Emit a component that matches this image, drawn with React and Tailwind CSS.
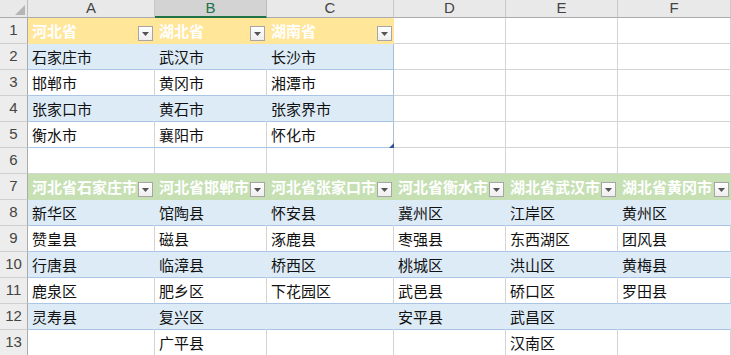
import React from 'react';

const COLS = [
  { key: 'A', w: 'w-[127px]' },
  { key: 'B', w: 'w-[112px]' },
  { key: 'C', w: 'w-[127px]' },
  { key: 'D', w: 'w-[112px]' },
  { key: 'E', w: 'w-[112px]' },
  { key: 'F', w: 'w-[113px]' },
];

// each row: kind per cell + text
const ROWS = [
  { n: 1, cells: [['yh', '河北省'], ['yh', '湖北省'], ['yh', '湖南省'], ['p'], ['p'], ['p']] },
  { n: 2, cells: [['b', '石家庄市'], ['b', '武汉市'], ['be', '长沙市'], ['p'], ['p'], ['p']] },
  { n: 3, cells: [['w', '邯郸市'], ['w', '黄冈市'], ['we', '湘潭市'], ['p'], ['p'], ['p']] },
  { n: 4, cells: [['b', '张家口市'], ['b', '黄石市'], ['be', '张家界市'], ['p'], ['p'], ['p']] },
  { n: 5, cells: [['w', '衡水市'], ['w', '襄阳市'], ['we', '怀化市', true], ['p'], ['p'], ['p']] },
  { n: 6, cells: [['p'], ['p'], ['p'], ['p'], ['p'], ['p']] },
  {
    n: 7,
    cells: [
      ['gh', '河北省石家庄市'],
      ['gh', '河北省邯郸市'],
      ['gh', '河北省张家口市'],
      ['gh', '河北省衡水市'],
      ['gh', '湖北省武汉市'],
      ['gh', '湖北省黄冈市'],
    ],
  },
  { n: 8, cells: [['b', '新华区'], ['b', '馆陶县'], ['b', '怀安县'], ['b', '冀州区'], ['b', '江岸区'], ['b', '黄州区']] },
  { n: 9, cells: [['w', '赞皇县'], ['w', '磁县'], ['w', '涿鹿县'], ['w', '枣强县'], ['w', '东西湖区'], ['w', '团风县']] },
  { n: 10, cells: [['b', '行唐县'], ['b', '临漳县'], ['b', '桥西区'], ['b', '桃城区'], ['b', '洪山区'], ['b', '黄梅县']] },
  { n: 11, cells: [['w', '鹿泉区'], ['w', '肥乡区'], ['w', '下花园区'], ['w', '武邑县'], ['w', '硚口区'], ['w', '罗田县']] },
  { n: 12, cells: [['b', '灵寿县'], ['b', '复兴区'], ['b', ''], ['b', '安平县'], ['b', '武昌区'], ['b', '']] },
  { n: 13, cells: [['w', ''], ['w', '广平县'], ['w', ''], ['w', ''], ['w', '汉南区'], ['w', '']] },
];

const KIND = {
  p: 'bg-white border-r-[#d4d4d4] border-b-[#d4d4d4]',
  b: 'bg-[#ddebf7] border-r-[#ddebf7] border-b-[#a9c6e6]',
  be: 'bg-[#ddebf7] border-r-[#a9bfd9] border-b-[#a9c6e6]',
  w: 'bg-white border-r-[#d4d4d4] border-b-[#a9c6e6]',
  we: 'bg-white border-r-[#a9bfd9] border-b-[#a9c6e6]',
  yh: 'bg-[#ffe699] border-r-[#ffe699] border-b-[#ffe699] font-bold text-white',
  gh: 'bg-[#c6e0b4] border-r-[#c6e0b4] border-b-[#c6e0b4] font-bold text-white',
};

function FilterButton() {
  return (
    <span className="mb-[2px] mr-[1px] flex h-[15px] w-[15px] shrink-0 items-center justify-center border border-[#a6a6a6] bg-gradient-to-b from-white to-[#eeeeee]">
      <svg width="7" height="4" viewBox="0 0 7 4">
        <path d="M0 0h7L3.5 4z" fill="#555" />
      </svg>
    </span>
  );
}

function Cell({ col, kind, text, handle }) {
  const head = kind === 'yh' || kind === 'gh';
  return (
    <div
      className={`relative flex h-[26px] shrink-0 items-end border-r border-b ${col.w} ${KIND[kind]} ${head ? '' : 'text-[#111]'}`}
    >
      <span className="flex-1 overflow-hidden whitespace-nowrap pl-[4px] pb-[3px] leading-[19px]">{text}</span>
      {head && <FilterButton />}
      {handle && <span className="absolute -bottom-[1px] -right-[1px] h-0 w-0 border-b-[5px] border-l-[5px] border-b-[#2f5597] border-l-transparent" />}
    </div>
  );
}

export default function App() {
  return (
    <div className="h-[355px] w-[731px] overflow-hidden bg-white text-[15px] font-['Noto_Sans_CJK_SC',sans-serif]">
      {/* column letters */}
      <div className="flex h-[18px] font-['Liberation_Sans',sans-serif] text-[15px] text-[#444]">
        <div className="relative w-[28px] shrink-0 border-r border-b border-r-[#bdbdbd] border-b-[#ababab] bg-[#e9e9e9]">
          <span className="absolute bottom-[2px] right-[2px] h-0 w-0 border-b-[10px] border-l-[10px] border-b-[#b5b5b5] border-l-transparent" />
        </div>
        {COLS.map((c) => (
          <div
            key={c.key}
            className={`flex shrink-0 items-center justify-center border-r ${c.w} ${
              c.key === 'B'
                ? 'border-b-2 border-r-[#bdbdbd] border-b-[#217346] bg-[#d3d3d3] text-[#217346]'
                : 'border-b border-r-[#c8c8c8] border-b-[#ababab] bg-[#e9e9e9]'
            }`}
          >
            {c.key}
          </div>
        ))}
      </div>

      {ROWS.map((r) => (
        <div key={r.n} className="flex">
          <div className="flex h-[26px] w-[28px] shrink-0 items-center justify-center border-r border-b border-r-[#ababab] border-b-[#cfcfcf] bg-[#ededed] font-['Liberation_Sans',sans-serif] text-[15px] text-[#444]">
            {r.n}
          </div>
          {r.cells.map((c, i) => (
            <Cell key={i} col={COLS[i]} kind={c[0]} text={c[1]} handle={c[2]} />
          ))}
        </div>
      ))}
    </div>
  );
}
